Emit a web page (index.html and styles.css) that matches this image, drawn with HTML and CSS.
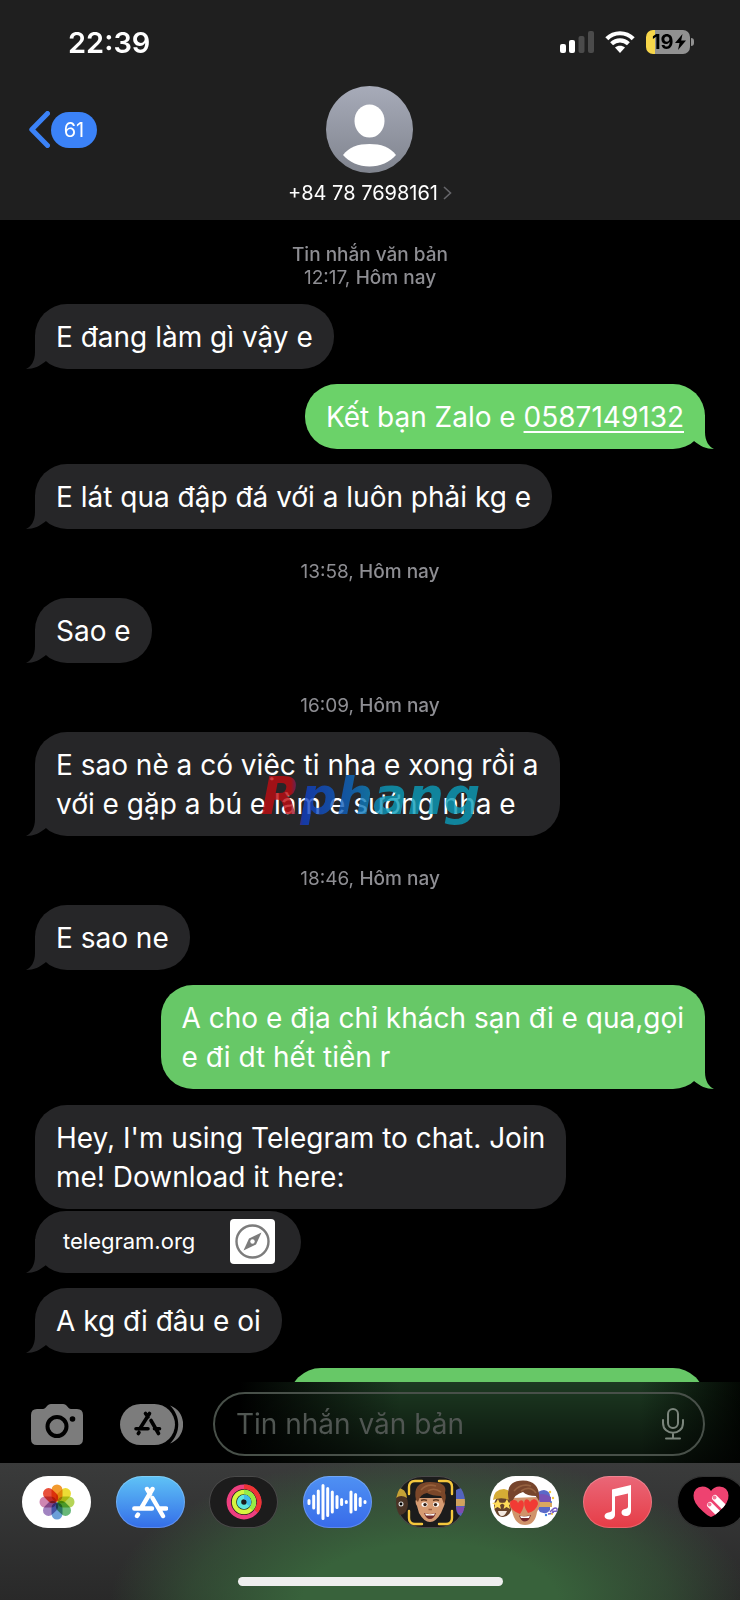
FILE: index.html
```html
<!DOCTYPE html>
<html lang="vi">
<head>
<meta charset="utf-8">
<meta name="viewport" content="width=device-width, initial-scale=1">
<title>+84 78 7698161</title>
<link rel="stylesheet" href="styles.css">
</head>
<body>
<div class="phone">
  <header class="header">
    <div class="status">
      <span class="clock">22:39</span>
      <div class="status-icons">
        <svg class="signal" width="34" height="22" viewBox="0 0 34 22" aria-hidden="true">
          <rect x="0" y="13" width="6" height="9" rx="2" fill="#fff"/>
          <rect x="9" y="9" width="6" height="13" rx="2" fill="#fff"/>
          <rect x="18.500" y="5" width="6" height="17" rx="2" fill="#4b4b4b"/>
          <rect x="28" y="0" width="6" height="22" rx="2" fill="#4b4b4b"/>
        </svg>
        <svg class="wifi" width="30" height="22" viewBox="0 0 30 22" aria-hidden="true">
          <g fill="none" stroke="#fff" stroke-width="4.200">
            <path d="M1.800 7.800C9 .4 21 .4 28.200 7.800"/>
            <path d="M6.600 12.700C11.400 8.200 18.600 8.200 23.400 12.700"/>
          </g>
          <path d="M10 16.600C12.800 14.200 17.200 14.200 20 16.600L15 22Z" fill="#fff"/>
        </svg>
        <span class="battery"><span>19</span><svg width="11" height="16" viewBox="0 0 11 16" aria-hidden="true"><path d="M7.500 0L0 9h4.500L3 16 11 6.500H6.200Z"/></svg></span>
      </div>
    </div>
    <nav class="nav">
      <button class="back" aria-label="Back, 61 unread">
        <svg width="21" height="37" viewBox="0 0 21 37" aria-hidden="true"><path d="M18.500 2.500L2.800 18.500 18.500 34.500" fill="none" stroke="#3b82f7" stroke-width="5" stroke-linecap="round" stroke-linejoin="round"/></svg>
        <span class="unread">61</span>
      </button>
      <button class="contact">
        <svg width="87" height="87" viewBox="0 0 87 87" aria-hidden="true">
          <defs><linearGradient id="avatar" x2="0" y2="1"><stop stop-color="#a7abb9"/><stop offset="1" stop-color="#80848e"/></linearGradient></defs>
          <circle cx="43.500" cy="43.500" r="43.500" fill="url(#avatar)"/>
          <ellipse cx="43.500" cy="35" rx="15" ry="16.500" fill="#fff"/>
          <path d="M17 69C23 61 32 58 43.500 58S64 61 70 69C64 76 54 80.500 43.500 80.500S23 76 17 69Z" fill="#fff"/>
        </svg>
        <span class="number">+84 78 7698161<svg width="9" height="14" viewBox="0 0 9 14" aria-hidden="true"><path d="M1 1l6.500 6L1 13" fill="none" stroke="#66666a" stroke-width="1.600"/></svg></span>
      </button>
    </nav>
  </header>

  <main class="chat">
    <p class="stamp"><b>Tin nhắn văn bản</b><br>12:17, <b>Hôm nay</b></p>
    <p class="bubble in tail">E đang làm gì vậy e</p>
    <p class="bubble out tail">Kết bạn Zalo e <a href="tel:0587149132">0587149132</a></p>
    <p class="bubble in tail">E lát qua đập đá với a luôn phải kg e</p>
    <p class="stamp">13:58, <b>Hôm nay</b></p>
    <p class="bubble in tail">Sao e</p>
    <p class="stamp">16:09, <b>Hôm nay</b></p>
    <div class="marked">
      <p class="bubble in tail">E sao nè a có việc ti nha e xong rồi a<br>với e gặp a bú e làm e sướng nha e</p>
      <span class="watermark">Rphang</span>
    </div>
    <p class="stamp">18:46, <b>Hôm nay</b></p>
    <p class="bubble in tail">E sao ne</p>
    <p class="bubble out tail late">A cho e địa chỉ khách sạn đi e qua,gọi<br>e đi dt hết tiền r</p>
    <div class="group">
      <p class="bubble in">Hey, I'm using Telegram to chat. Join<br>me! Download it here:</p>
      <a class="bubble in tail preview" href="https://telegram.org">
        <span>telegram.org</span>
        <svg width="45" height="45" viewBox="0 0 45 45" aria-hidden="true">
          <rect width="45" height="45" rx="4" fill="#fff"/>
          <circle cx="22.500" cy="22.500" r="16" fill="none" stroke="#7c7c7c" stroke-width="2.400"/>
          <path d="M31.500 13.500L26 25.500 13.500 31.500 19 19.500Z" fill="#7c7c7c"/>
          <circle cx="22.500" cy="22.500" r="2.200" fill="#fff"/>
        </svg>
      </a>
    </div>
    <p class="bubble in tail">A kg đi đâu e oi</p>
    <p class="bubble out late partial"></p>
  </main>

  <form class="compose">
    <button type="button" class="tool" aria-label="Camera">
      <svg width="52" height="41" viewBox="0 0 52 41" aria-hidden="true">
        <path d="M6 5H12C15 5 16 0 20 0H32C36 0 37 5 40 5H46Q52 5 52 11V35Q52 41 46 41H6Q0 41 0 35V11Q0 5 6 5Z" fill="#7c7c7c"/>
        <circle cx="26" cy="22.500" r="9.500" fill="none" stroke="#000" stroke-width="4"/>
        <circle cx="41.500" cy="15" r="2.800"/>
      </svg>
    </button>
    <button type="button" class="tool" aria-label="Apps">
      <svg width="63" height="41" viewBox="0 0 63 41" aria-hidden="true">
        <path d="M50 1.500C67 7 68 33 50 39.500C61 29 61 12 50 1.500Z" fill="#7c7c7c"/>
        <rect width="55" height="41" rx="20.500" fill="#7c7c7c"/>
        <g fill="none" stroke="#000" stroke-width="3.600" stroke-linecap="round">
          <path d="M29.500 9.500L20 24.500M25.500 9.500L28 13M31 16.500L38.500 29.500M16 24.800H28M34.500 24.800H39.500M19 28.500L18.300 29.500"/>
        </g>
      </svg>
    </button>
    <div class="field">
      <input type="text" aria-label="Tin nhắn văn bản" placeholder="Tin nhắn văn bản">
      <button type="button" class="mic" aria-label="Dictate">
        <svg width="22" height="32" viewBox="0 0 22 32" aria-hidden="true"><g fill="none" stroke="#7b857c" stroke-width="2" stroke-linecap="round"><rect x="6" y="1" width="10" height="19" rx="5"/><path d="M1 12V15C1 28 21 28 21 15V12M11 25V30M4 30.500H18"/></g></svg>
      </button>
    </div>
  </form>

  <footer class="drawer">
    <div class="apps">
      <button class="app white" aria-label="Photos">
        <svg width="36" height="36" viewBox="-18 -18 36 36" aria-hidden="true">
          <g class="petals">
            <rect x="-5.500" y="-17.500" width="11" height="17" rx="5.500" fill="#f29a2e"/>
            <rect x="-5.500" y="-17.500" width="11" height="17" rx="5.500" fill="#ecdc35" transform="rotate(45)"/>
            <rect x="-5.500" y="-17.500" width="11" height="17" rx="5.500" fill="#b5d457" transform="rotate(90)"/>
            <rect x="-5.500" y="-17.500" width="11" height="17" rx="5.500" fill="#68b878" transform="rotate(135)"/>
            <rect x="-5.500" y="-17.500" width="11" height="17" rx="5.500" fill="#6b9fd8" transform="rotate(180)"/>
            <rect x="-5.500" y="-17.500" width="11" height="17" rx="5.500" fill="#a184c1" transform="rotate(225)"/>
            <rect x="-5.500" y="-17.500" width="11" height="17" rx="5.500" fill="#cf86b2" transform="rotate(270)"/>
            <rect x="-5.500" y="-17.500" width="11" height="17" rx="5.500" fill="#e8503c" transform="rotate(315)"/>
          </g>
        </svg>
      </button>
      <button class="app store" aria-label="App Store">
        <svg width="36" height="33" viewBox="0 0 36 33" aria-hidden="true"><g fill="none" stroke="#fff" stroke-width="4.400" stroke-linecap="round"><path d="M20.500 3L9 22.300M15 3L18 8M20.500 12L31 30M2.300 22.500H20M27.500 22.500H34M6 28.500L5 30"/></g></svg>
      </button>
      <button class="app dark" aria-label="Fitness">
        <svg width="36" height="36" viewBox="-18 -18 36 36" aria-hidden="true"><g fill="none" stroke-width="4.400"><circle r="15.200" stroke="#ee3f7f"/><path d="M0-15.200A15.200 15.200 0 0 1 12 9.300" stroke="#ee3434"/><circle r="10" stroke="#d6f53f"/><path d="M0-10A10 10 0 0 1 7 7" stroke="#96ec46"/><circle r="5" stroke="#5fe6dd"/><path d="M0-5A5 5 0 0 1 4 3" stroke="#40bde8"/></g></svg>
      </button>
      <button class="app audio" aria-label="Audio">
        <svg width="60" height="38" viewBox="0 0 60 38" aria-hidden="true"><path d="M2 17.500V20.500M6.700 13V25M11.300 8V30M16 2.500V35.500M20.700 5.500V32.500M25.300 9V29M30 13.500V24.500M34.600 16.500V21.500M39.300 18.500V19.500M44 9V29M48.600 11.500V26.500M53.200 15.500V22.500M58 18.500V19.500" fill="none" stroke="#fff" stroke-width="3" stroke-linecap="round"/></svg>
      </button>
      <button class="app dark" aria-label="Memoji">
        <svg width="70" height="52" viewBox="0 0 70 52" aria-hidden="true">
          <ellipse cx="4" cy="28" rx="8" ry="11" fill="#4a3325"/><path d="M0 22V12Q10 11 11 22Q5 18 0 22Z" fill="#c5a235"/><circle cx="5" cy="28" r="2.500" fill="#ddd"/><circle cx="5" cy="28" r="1.400"/>
          <path d="M60 14Q66 10 70 15V40Q60 42 60 31Z" fill="#5364bd"/><path d="M60 23H70V30H60Z" fill="#d1a25d"/><path d="M60 31H70V37H62Z" fill="#7e4cb0"/>
          <path d="M21 22Q18 25 21 30L23 37Q28 46 34 46T45 37L48 30Q50 25 47 22Z" fill="#d69b72"/>
          <path d="M20 24Q16 6 34 6T49 17Q51 21 48 28L45 20Q36 20 31 17Q24 18 22 26Z" fill="#7b4729"/>
          <path d="M25 14Q31 7 40 10M32 15Q38 11 45 16" fill="none" stroke="#96603b" stroke-width="1.600"/>
          <g fill="#fff"><ellipse cx="28.500" cy="28.500" rx="3" ry="2.300"/><ellipse cx="40" cy="28.500" rx="3" ry="2.300"/></g>
          <circle cx="29" cy="28.600" r="1.700" fill="#322018"/><circle cx="39.500" cy="28.600" r="1.700" fill="#322018"/>
          <path d="M25 24.500q3-1.500 6 0M37 24.500q3-1.500 6 0" fill="none" stroke="#63391f" stroke-width="1.400"/>
          <path d="M32.500 33.500H36" stroke="#9f6142" stroke-width="1.500"/>
          <path d="M28 37Q34 39 40 37Q38 43 34 43T28 37Z" fill="#712b29"/><path d="M29 37.500Q34 39 39 37.500L38 39.500H30Z" fill="#fff"/>
          <path d="M13 18V11Q13 5 19 5H26M43 5H50Q56 5 56 11V18M56 35V42Q56 48 50 48H43M26 48H19Q13 48 13 42V35" fill="none" stroke="#f4c73d" stroke-width="2.400" stroke-linecap="round"/>
        </svg>
      </button>
      <button class="app white" aria-label="Memoji stickers">
        <svg width="70" height="52" viewBox="0 0 70 52" aria-hidden="true">
          <ellipse cx="13" cy="30" rx="9" ry="11" fill="#67432b"/><path d="M3 24Q4 13 14 13Q23 14 22 25Q12 20 3 24Z" fill="#d6ac35"/>
          <path d="M8 23l1.500 3.500 3.500.5-3 2 1 4-3.500-2-3.500 2 1-4-3-2 4-.5ZM17 23l1.500 3.500 3.500.5-3 2 1 4-3.500-2-3 2 1-4-3-2 3.500-.5Z" fill="#ffdc59"/><path d="M8 35H17Q15 40 12 40T8 35Z" fill="#f3e8df"/>
          <path d="M46 20Q48 14 54 14Q60 15 60 20V34Q57 39 50 36L46 30Z" fill="#5a69c8"/><path d="M48 26H62V31H48Z" fill="#dba860"/><path d="M46 19Q54 16 61 21V26H47Z" fill="#7852b5"/>
          <path d="M60 36Q65 30 67 33T62 35M58 38Q63 38 64 35" fill="none" stroke="#755ec5" stroke-width="1.400"/>
          <g><circle cx="60" cy="16" r="1.200" fill="#f4c73d"/><circle cx="63" cy="22" r="1.200" fill="#f4c73d"/><circle cx="61" cy="26" r="1" fill="#4a75da"/><circle cx="56" cy="39" r="1.200" fill="#3d80df"/><circle cx="62" cy="38" r="1" fill="#f4c73d"/></g>
          <path d="M21 22Q18 28 22 35Q25 49 35 49T47 36Q52 28 48 21Z" fill="#d0936a"/>
          <path d="M19 25Q14 5 33 4.500Q51 5 49 25L46 20Q37 20 33 16Q25 18 22 26Z" fill="#77452c"/><path d="M24 15Q31 7 41 10M31 15Q40 9 46 17" fill="none" stroke="#95613f" stroke-width="1.600"/>
          <path d="M30 38Q20 34 20 28Q20 24 24 24Q27 24 28 27Q30 23 33 25Q36 29 30 38Z" fill="#f13b34"/><path d="M38 37Q46 35 48 28Q48 24 44 23Q41 24 40 26Q38 22 35 24Q32 28 38 37Z" fill="#f13b34"/>
          <path d="M29 39.500Q35 41 41 39Q39 45.500 35 45.500T29 39.500Z" fill="#75282b"/><path d="M30 40Q35 41 40 39.500L39 42H31Z" fill="#fff"/>
        </svg>
      </button>
      <button class="app music" aria-label="Music">
        <svg width="28" height="35" viewBox="0 0 28 35" aria-hidden="true"><path d="M8 4.500L27 0V26C27 29 25 31 22 31S17.500 29.500 17.500 27.500S19 24 22 23.800Q24 23.500 24 21.500V8.500L11 11.500V29.500C11 33 8.500 34.500 5.500 34.500S.5 33 .5 31S2.500 27.500 5.500 27.200Q8 27 8 25Z" fill="#fff"/></svg>
      </button>
      <button class="app black" aria-label="Digital Touch">
        <svg width="36" height="32" viewBox="0 0 36 32" aria-hidden="true"><defs><clipPath id="heart"><path d="M18 31Q15 30 10 25.500Q0 17 .5 9.500Q1 1 9.500.5Q15 .5 18 5Q21 .5 26.500.5Q35 1 35.500 9.500Q36 17 26 25.500Q21 30 18 31Z"/></clipPath></defs><g clip-path="url(#heart)"><path d="M0 0H36V32H0Z" fill="#ee4270"/><g stroke="#fff" stroke-width="6" stroke-linecap="round"><path d="M22 12L34 24M17 19L29 31"/></g></g><circle cx="21.500" cy="11.500" r="2" fill="#f27998"/><circle cx="16.500" cy="18.500" r="2" fill="#f27998"/></svg>
      </button>
    </div>
    <div class="home"></div>
  </footer>
</div>
</body>
</html>
```
FILE: styles.css
```css
* { box-sizing: border-box; }

body {
  margin: 0;
  background: #000;
  color: #fff;
  font-family: Inter, "Liberation Sans", sans-serif;
}

p { margin: 0; }

button {
  padding: 0;
  border: 0;
  background: none;
  color: inherit;
  font: inherit;
}

svg { display: block; flex: none; }

.phone {
  display: flex;
  flex-direction: column;
  height: 100vh;
  overflow: hidden;
}

.header {
  flex: none;
  background: #1f1f1f;
  padding-bottom: 15px;
}

.status {
  display: flex;
  align-items: center;
  justify-content: space-between;
  height: 86px;
  padding: 0 50px 2px 68px;
}

.clock { font-size: 29px; font-weight: 600; }

.status-icons { display: flex; align-items: center; }
.wifi { margin: 0 11px; }

.battery {
  position: relative;
  display: flex;
  align-items: center;
  gap: 1px;
  width: 44px;
  height: 24px;
  padding-left: 6px;
  border-radius: 7px;
  background: linear-gradient(90deg, #f7d64a 9px, #919191 9px);
  color: #000;
  font-size: 20px;
  font-weight: 700;
}

.battery::after {
  content: "";
  position: absolute;
  right: -4px;
  top: 8px;
  width: 3px;
  height: 8px;
  border-radius: 0 3px 3px 0;
  background: #919191;
}

.nav {
  display: grid;
  grid-template-columns: 1fr auto 1fr;
  align-items: start;
}

.back {
  display: flex;
  align-items: center;
  gap: 1px;
  padding: 25px 0 0 29px;
}

.unread {
  width: 46px;
  border-radius: 18px;
  background: #3b82f7;
  font-size: 20px;
  line-height: 36px;
}

.contact {
  display: flex;
  flex-direction: column;
  align-items: center;
  gap: 8px;
}

.number {
  display: flex;
  align-items: center;
  gap: 5px;
  font-size: 20px;
  line-height: 24px;
}

.chat {
  display: flex;
  flex: 1;
  flex-direction: column;
  gap: 15px;
  min-height: 0;
  padding: 7px 35px 0;
  overflow: hidden;
}

.chat > * { flex: none; }

.stamp {
  padding: 16px 0 0;
  color: #8e8e93;
  font-size: 19px;
  line-height: 23px;
  text-align: center;
}

.stamp b { font-weight: 500; }

.bubble {
  position: relative;
  width: fit-content;
  padding: 14px 21px 12px;
  border-radius: 32px;
  font-size: 28px;
  line-height: 39px;
}

.bubble a { color: inherit; text-decoration-thickness: 2px; text-underline-offset: 4px; }

.in { background: #262628; }
.out { align-self: flex-end; background: #6bd269; }
.late { background: #67c867; }

.tail::after {
  content: "";
  position: absolute;
  bottom: 0;
  left: -9px;
  width: 20px;
  height: 34px;
  background: inherit;
  clip-path: path("M9 0V17C9 26 5 32 0 34C8 34 14 31 20 26V0Z");
}

.out.tail::after {
  right: -9px;
  left: auto;
  transform: scaleX(-1);
}

.marked { position: relative; }

.watermark {
  position: absolute;
  top: 33px;
  left: 224px;
  padding: 0 8px 0 2px;
  background: linear-gradient(90deg, #c00d12 32px, #123fc4 44px, #1065bd 90px, #0c9dba 130px);
  background-clip: text;
  -webkit-background-clip: text;
  color: transparent;
  font-family: "DejaVu Sans", sans-serif;
  font-size: 51px;
  font-style: italic;
  font-weight: 700;
  line-height: 64px;
  opacity: 0.8;
}

.group {
  display: flex;
  flex-direction: column;
  gap: 2px;
  padding-top: 1px;
}

.preview {
  display: flex;
  align-items: center;
  gap: 35px;
  padding: 8px 26px 9px 28px;
  color: #fff;
  font-size: 22px;
  line-height: 27px;
  text-decoration: none;
}

.partial { width: 416px; height: 65px; }

.compose {
  display: flex;
  flex: none;
  align-items: center;
  padding: 10px 35px 7px 31px;
  background:
    linear-gradient(rgba(0, 0, 0, 0), rgba(0, 0, 0, 0.7)),
    linear-gradient(90deg, #000 240px, #1d3a22 400px, #1d3a22 640px, #030803);
}

.tool:first-child { margin-right: 37px; }

.field {
  display: flex;
  flex: 1;
  align-items: center;
  min-width: 0;
  height: 64px;
  margin-left: 30px;
  padding: 0 19px 0 21px;
  border: 2px solid #485049;
  border-radius: 32px;
}

.field input {
  flex: 1;
  min-width: 0;
  padding: 0;
  border: 0;
  outline: 0;
  background: none;
  color: #fff;
  font: 28px/39px Inter, "Liberation Sans", sans-serif;
}

.field input::placeholder { color: #505652; opacity: 1; }

.drawer {
  flex: none;
  padding: 13px 0 14px 22px;
  overflow: hidden;
  background:
    radial-gradient(ellipse 320px 150px at 430px 140px, #38623b 0 40%, rgba(56, 98, 59, 0.5) 75%, rgba(56, 98, 59, 0)),
    linear-gradient(#3a3b3b, #292929);
}

.apps {
  display: flex;
  justify-content: space-between;
  margin-right: -6px;
}

.app {
  display: grid;
  place-items: center;
  width: 69px;
  height: 52px;
  border-radius: 26px;
  overflow: hidden;
  box-shadow: inset 0 0 0 1px rgba(255, 255, 255, 0.2);
}

.white { background: #fff; }
.dark { background: #1c1c1c; }
.black { background: #000; }
.store { background: linear-gradient(#5fc3f6, #346de8); }
.audio { background: linear-gradient(#4f91f3, #386be9); }
.music { background: linear-gradient(#ea6778, #e63c46); }

.petals { isolation: isolate; }
.petals rect { mix-blend-mode: multiply; }

.home {
  width: 265px;
  height: 9px;
  margin: 49px 0 0 216px;
  border-radius: 5px;
  background: #eee;
}
```
